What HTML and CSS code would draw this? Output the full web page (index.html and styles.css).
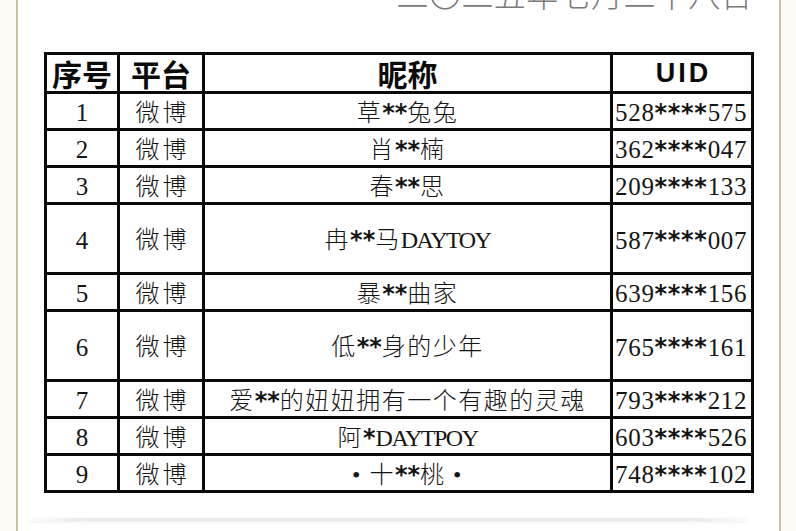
FILE: index.html
```html
<!DOCTYPE html>
<html lang="zh-CN">
<head>
<meta charset="utf-8">
<title>名单</title>
<link rel="stylesheet" href="styles.css">
</head>
<body>
<div class="frame">
  <div class="date">二〇二五年七月二十八日</div>
  <div class="sheet">
    <div class="row head">
      <div class="cell">序号</div>
      <div class="cell">平台</div>
      <div class="cell">昵称</div>
      <div class="cell uid-head">UID</div>
    </div>
    <div class="row">
      <div class="cell num">1</div><div class="cell cjk">微博</div>
      <div class="cell nick">草<span class="ast">**</span>兔兔</div>
      <div class="cell uid">528<span class="ast">****</span>575</div>
    </div>
    <div class="row">
      <div class="cell num">2</div><div class="cell cjk">微博</div>
      <div class="cell nick">肖<span class="ast">**</span>楠</div>
      <div class="cell uid">362<span class="ast">****</span>047</div>
    </div>
    <div class="row">
      <div class="cell num">3</div><div class="cell cjk">微博</div>
      <div class="cell nick">春<span class="ast">**</span>思</div>
      <div class="cell uid">209<span class="ast">****</span>133</div>
    </div>
    <div class="row tall">
      <div class="cell num">4</div><div class="cell cjk">微博</div>
      <div class="cell nick">冉<span class="ast">**</span>马<span class="latin">DAYTOY</span></div>
      <div class="cell uid">587<span class="ast">****</span>007</div>
    </div>
    <div class="row">
      <div class="cell num">5</div><div class="cell cjk">微博</div>
      <div class="cell nick">暴<span class="ast">**</span>曲家</div>
      <div class="cell uid">639<span class="ast">****</span>156</div>
    </div>
    <div class="row tall">
      <div class="cell num">6</div><div class="cell cjk">微博</div>
      <div class="cell nick">低<span class="ast">**</span>身的少年</div>
      <div class="cell uid">765<span class="ast">****</span>161</div>
    </div>
    <div class="row">
      <div class="cell num">7</div><div class="cell cjk">微博</div>
      <div class="cell nick">爱<span class="ast">**</span>的妞妞拥有一个有趣的灵魂</div>
      <div class="cell uid">793<span class="ast">****</span>212</div>
    </div>
    <div class="row">
      <div class="cell num">8</div><div class="cell cjk">微博</div>
      <div class="cell nick">阿<span class="ast">*</span><span class="latin">DAYTPOY</span></div>
      <div class="cell uid">603<span class="ast">****</span>526</div>
    </div>
    <div class="row">
      <div class="cell num">9</div><div class="cell cjk">微博</div>
      <div class="cell nick">• 十<span class="ast">**</span>桃 •</div>
      <div class="cell uid">748<span class="ast">****</span>102</div>
    </div>
  </div>
  <div class="shadow-line"></div>
</div>
</body>
</html>
```

FILE: styles.css
```css
html, body {
  margin: 0;
  padding: 0;
}
body {
  background: #fbfaf3;
  width: 796px;
  height: 531px;
  overflow: hidden;
}
.frame {
  display: flex;
  flex-direction: column;
  margin-left: 16px;
  width: 761px;
  height: 531px;
  border-left: 2px solid #cbc4a4;
  border-right: 2px solid #cbc4a4;
  background: #ffffff;
}
.date {
  margin-top: -23px;
  height: 32px;
  line-height: 32px;
  padding-right: 26px;
  text-align: right;
  font-family: "Noto Sans CJK SC", sans-serif;
  font-weight: 300;
  font-size: 32px;
  letter-spacing: 0.4px;
  color: #7a7a7a;
  white-space: nowrap;
}
.sheet {
  margin-top: 43px;
  margin-left: 26px;
  width: 704px;
  padding: 3px;
  background: #0a0a0a;
  display: flex;
  flex-direction: column;
  gap: 3px;
}
.row {
  display: grid;
  grid-template-columns: 70px 82px 405px 138px;
  gap: 3px;
  height: 34px;
}
.row.head {
  height: 36px;
}
.row.tall {
  height: 67px;
}
.cell {
  background: #ffffff;
  display: flex;
  align-items: center;
  justify-content: center;
  line-height: 1;
  white-space: nowrap;
  font-family: "Liberation Serif", "Noto Sans CJK SC", serif;
  font-size: 24px;
  color: #151515;
  padding-top: 3px;
  box-sizing: border-box;
}
.head .cell {
  font-family: "Noto Sans CJK SC", sans-serif;
  font-weight: 700;
  font-size: 30px;
  color: #0a0a0a;
  padding-top: 0;
}
.head .uid-head {
  font-family: "Liberation Sans", sans-serif;
  font-size: 27px;
  letter-spacing: 3px;
  padding-left: 3px;
}
.num {
  font-size: 25px;
}
.cjk, .nick {
  font-family: "Liberation Serif", "Noto Sans CJK SC", serif;
  font-weight: 300;
  letter-spacing: 1.5px;
}
.cjk {
  letter-spacing: 3px;
  padding-left: 3px;
}
.latin {
  font-family: "Liberation Serif", serif;
  font-weight: 400;
  letter-spacing: -1.5px;
}
.uid {
  font-size: 25px;
  letter-spacing: 0.7px;
  justify-content: flex-start;
  padding-left: 2px;
}
.ast {
  font-family: "DejaVu Sans", sans-serif;
  font-weight: 700;
  font-size: 24px;
  letter-spacing: 0;
  vertical-align: -0.3em;
}
.uid .ast {
  letter-spacing: 0.7px;
}
.shadow-line {
  margin-top: 25px;
  margin-left: 12px;
  width: 718px;
  height: 3px;
  background: linear-gradient(to right, rgba(120,115,95,0.02), rgba(120,115,95,0.16) 8%, rgba(120,115,95,0.16) 92%, rgba(120,115,95,0.02));
  box-shadow: 0 1px 3px rgba(120,115,95,0.12);
}
```
